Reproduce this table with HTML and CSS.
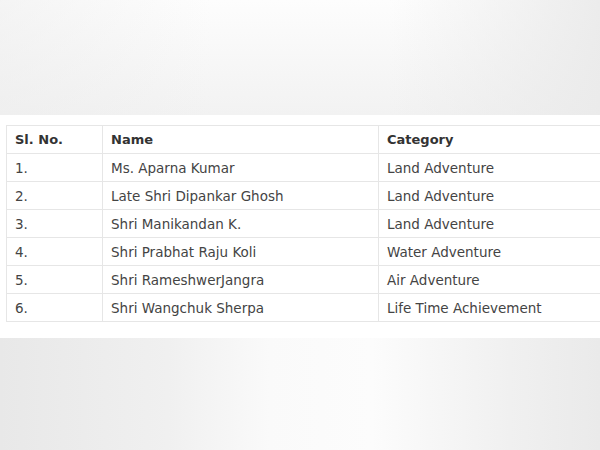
FILE: index.html
```html
<!DOCTYPE html>
<html>
<head>
<meta charset="utf-8">
<link rel="stylesheet" href="styles.css">
</head>
<body>
<div class="band band-top"></div>
<div class="content">
  <table class="awards">
    <thead>
      <tr><th class="c1">Sl. No.</th><th class="c2">Name</th><th class="c3">Category</th></tr>
    </thead>
    <tbody>
      <tr><td>1.</td><td>Ms. Aparna Kumar</td><td>Land Adventure</td></tr>
      <tr><td>2.</td><td>Late Shri Dipankar Ghosh</td><td>Land Adventure</td></tr>
      <tr><td>3.</td><td>Shri Manikandan K.</td><td>Land Adventure</td></tr>
      <tr><td>4.</td><td>Shri Prabhat Raju Koli</td><td>Water Adventure</td></tr>
      <tr><td>5.</td><td>Shri RameshwerJangra</td><td>Air Adventure</td></tr>
      <tr><td>6.</td><td>Shri Wangchuk Sherpa</td><td>Life Time Achievement</td></tr>
    </tbody>
  </table>
</div>
<div class="band band-bottom"></div>
</body>
</html>
```
FILE: styles.css
```css
html, body {
  margin: 0;
  padding: 0;
  width: 600px;
  height: 450px;
  overflow: hidden;
  background: #fff;
}
.band {
  width: 600px;
}
.band-top {
  height: 115px;
  background:
    linear-gradient(90deg, rgba(236,236,236,0.5) 0%, rgba(255,255,255,0) 35%, rgba(255,255,255,0) 65%, rgba(234,234,234,0.9) 100%),
    linear-gradient(180deg, #fdfdfd 0%, #f2f2f2 100%);
}
.band-bottom {
  height: 112px;
  background:
    linear-gradient(90deg, #e8e8e8 0%, #f0f0f0 28%, #fafafa 45%, #fcfcfc 62%, #f0f0f0 85%, #eaeaea 100%);
}
.content {
  height: 223px;
  padding: 10px 0 0 6px;
  box-sizing: border-box;
  overflow: hidden;
}
.awards {
  border-collapse: collapse;
  width: 640px;
  font-family: "DejaVu Sans", Verdana, sans-serif;
  font-size: 13.5px;
  color: #444;
}
.awards th, .awards td {
  border: 1px solid #e6e6e6;
  height: 27px;
  padding: 0 8px;
  text-align: left;
  vertical-align: middle;
}
.awards th {
  font-weight: bold;
  font-size: 13px;
  color: #333;
}
.c1 { width: 79px; }
.c2 { width: 259px; }
```
